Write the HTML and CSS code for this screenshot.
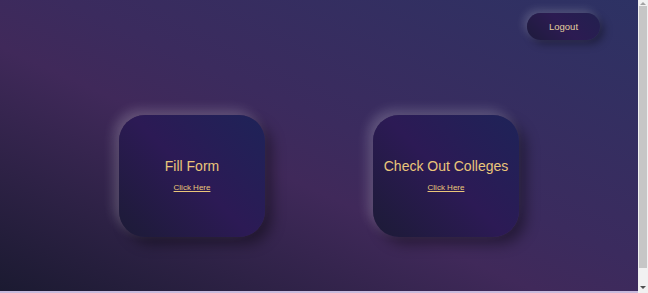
FILE: index.html
```html
<!DOCTYPE html>
<html lang="en">
<head>
    <meta charset="UTF-8">
    <meta name="viewport" content="width=device-width, initial-scale=1.0">
    <title>Dashboard</title>
    <link rel="stylesheet" href="styles.css">
</head>
<body>
    <div class="page">
        <div class="topbar">
            <button class="logout-btn">Logout</button>
        </div>
        <div class="cards">
            <div class="card">
                <div class="card-title">Fill Form</div>
                <a class="card-link" href="#">Click Here</a>
            </div>
            <div class="card">
                <div class="card-title">Check Out Colleges</div>
                <a class="card-link" href="#">Click Here</a>
            </div>
        </div>
    </div>
    <div class="scrollbar">
        <div class="arrow-up"></div>
        <div class="thumb"></div>
        <div class="arrow-down"></div>
    </div>
</body>
</html>
```

FILE: styles.css
```css
body {
    margin: 0;
    height: 100vh;
    display: flex;
    overflow: hidden;
    font-family: "Liberation Sans", Arial, sans-serif;
}
.page {
    flex: 1;
    display: flex;
    flex-direction: column;
    box-sizing: border-box;
    border-bottom: 2px solid #c9bbdd;
    background: linear-gradient(to top right, #1b1a31 0%, #40295a 42%, #3b2b5e 55%, #2d3264 100%);
}
.topbar {
    display: flex;
    justify-content: flex-end;
    padding: 13px 38px 0 0;
}
.logout-btn {
    width: 73px;
    height: 27px;
    border: none;
    border-radius: 14px;
    background: linear-gradient(45deg, #1e1b3c, #2c1b52, #22204f);
    color: #e4cf9f;
    font-family: inherit;
    font-size: 9.5px;
    cursor: pointer;
    box-shadow: -3px -3px 8px rgba(255, 255, 255, 0.18), 4px 4px 8px rgba(0, 0, 0, 0.35);
}
.cards {
    flex: 1;
    display: flex;
    justify-content: center;
    align-items: center;
    gap: 108px;
    padding-top: 21px;
}
.card {
    width: 146px;
    height: 122px;
    box-sizing: border-box;
    padding-bottom: 3px;
    border-radius: 26px;
    display: flex;
    flex-direction: column;
    justify-content: center;
    align-items: center;
    background: linear-gradient(45deg, #1c1b36 0%, #2c1a55 50%, #1e2358 100%);
    box-shadow: -5px -5px 12px rgba(255, 255, 255, 0.2), 7px 7px 14px rgba(0, 0, 0, 0.4);
}
.card-title {
    color: #eac67a;
    font-size: 14px;
    line-height: 16px;
    margin-bottom: 9px;
}
.card-link {
    color: #eac67a;
    font-size: 8px;
    line-height: 9px;
}

/* browser scrollbar as it shows in the shot */
.scrollbar {
    width: 10px;
    display: flex;
    flex-direction: column;
    align-items: center;
    background: #f1f1f1;
}
.arrow-up {
    margin-top: 2px;
    border-left: 3px solid transparent;
    border-right: 3px solid transparent;
    border-bottom: 3px solid #a3a3a3;
}
.thumb {
    width: 8px;
    height: 262px;
    margin-top: 1px;
    background: #c6c6c6;
}
.arrow-down {
    margin-top: auto;
    margin-bottom: 4px;
    border-left: 3px solid transparent;
    border-right: 3px solid transparent;
    border-top: 3px solid #505050;
}
```
